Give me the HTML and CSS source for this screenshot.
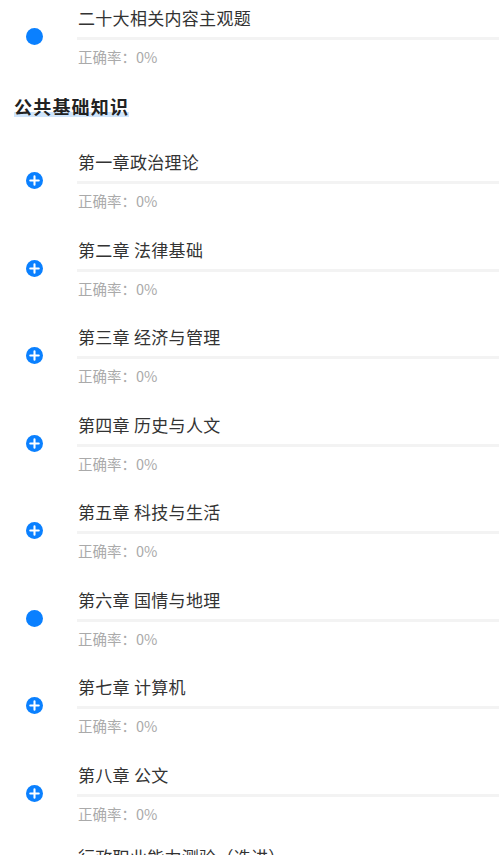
FILE: index.html
```html
<!DOCTYPE html>
<html lang="zh-CN">
<head>
    <meta charset="UTF-8">
    <title>章节练习</title>
    <link rel="stylesheet" href="styles.css">
</head>
<body>
    <div class="list list-top">
        <div class="item">
            <span class="icon dot"></span>
            <div class="content">
                <div class="title">二十大相关内容主观题</div>
                <div class="bar"></div>
                <div class="rate">正确率：0%</div>
            </div>
        </div>
    </div>

    <h2 class="section"><span>公共基础知识</span></h2>

    <div class="list">
        <div class="item">
            <span class="icon plus"><svg viewBox="0 0 18 18"><path d="M9 4.5v9M4.5 9h9"/></svg></span>
            <div class="content">
                <div class="title">第一章政治理论</div>
                <div class="bar"></div>
                <div class="rate">正确率：0%</div>
            </div>
        </div>
        <div class="item">
            <span class="icon plus"><svg viewBox="0 0 18 18"><path d="M9 4.5v9M4.5 9h9"/></svg></span>
            <div class="content">
                <div class="title">第二章 法律基础</div>
                <div class="bar"></div>
                <div class="rate">正确率：0%</div>
            </div>
        </div>
        <div class="item">
            <span class="icon plus"><svg viewBox="0 0 18 18"><path d="M9 4.5v9M4.5 9h9"/></svg></span>
            <div class="content">
                <div class="title">第三章 经济与管理</div>
                <div class="bar"></div>
                <div class="rate">正确率：0%</div>
            </div>
        </div>
        <div class="item">
            <span class="icon plus"><svg viewBox="0 0 18 18"><path d="M9 4.5v9M4.5 9h9"/></svg></span>
            <div class="content">
                <div class="title">第四章 历史与人文</div>
                <div class="bar"></div>
                <div class="rate">正确率：0%</div>
            </div>
        </div>
        <div class="item">
            <span class="icon plus"><svg viewBox="0 0 18 18"><path d="M9 4.5v9M4.5 9h9"/></svg></span>
            <div class="content">
                <div class="title">第五章 科技与生活</div>
                <div class="bar"></div>
                <div class="rate">正确率：0%</div>
            </div>
        </div>
        <div class="item">
            <span class="icon dot"></span>
            <div class="content">
                <div class="title">第六章 国情与地理</div>
                <div class="bar"></div>
                <div class="rate">正确率：0%</div>
            </div>
        </div>
        <div class="item">
            <span class="icon plus"><svg viewBox="0 0 18 18"><path d="M9 4.5v9M4.5 9h9"/></svg></span>
            <div class="content">
                <div class="title">第七章 计算机</div>
                <div class="bar"></div>
                <div class="rate">正确率：0%</div>
            </div>
        </div>
        <div class="item">
            <span class="icon plus"><svg viewBox="0 0 18 18"><path d="M9 4.5v9M4.5 9h9"/></svg></span>
            <div class="content">
                <div class="title">第八章 公文</div>
                <div class="bar"></div>
                <div class="rate">正确率：0%</div>
            </div>
        </div>
        <div class="item item-tight">
            <span class="icon plus"><svg viewBox="0 0 18 18"><path d="M9 4.5v9M4.5 9h9"/></svg></span>
            <div class="content">
                <div class="title">行政职业能力测验（选讲）</div>
                <div class="bar"></div>
                <div class="rate">正确率：0%</div>
            </div>
        </div>
    </div>
</body>
</html>
```

FILE: styles.css
```css
body {
    margin: 0;
    background: #ffffff;
    font-family: "Noto Sans CJK SC", "Noto Sans", sans-serif;
    overflow: hidden;
}

/* la vista está desplazada: el primer elemento queda cortado arriba */
.list-top {
    margin-top: -6px;
}

.item {
    display: flex;
    align-items: center;
    padding: 12px 0 14.5px;
}

.item-tight {
    padding-top: 7px;
}

.icon {
    flex: none;
    width: 17px;
    height: 17px;
    margin: 0 34px 0 26px;
    border-radius: 50%;
    background-color: #0a80ff;
}

.icon svg {
    display: block;
    width: 17px;
    height: 17px;
    fill: none;
    stroke: #ffffff;
    stroke-width: 2.2;
    stroke-linecap: round;
}

.content {
    flex: 1;
    min-width: 0;
}

.title {
    font-size: 17px;
    line-height: 24px;
    letter-spacing: 0.3px;
    color: #333333;
    padding-left: 1px;
    white-space: nowrap;
}

.bar {
    height: 3px;
    margin-top: 7px;
    background-color: #f3f3f3;
}

.rate {
    margin-top: 7px;
    font-size: 14.5px;
    line-height: 20px;
    color: #aaaaaa;
    padding-left: 1px;
}

.section {
    margin: 12px 0 20.5px;
    padding-left: 14px;
    font-size: 18px;
    line-height: 24px;
    font-weight: bold;
    letter-spacing: 1.2px;
    color: #222222;
}

.section span {
    background: linear-gradient(to bottom, transparent 72%, #cfe5fc 72%, #cfe5fc 92%, transparent 92%);
}
```
